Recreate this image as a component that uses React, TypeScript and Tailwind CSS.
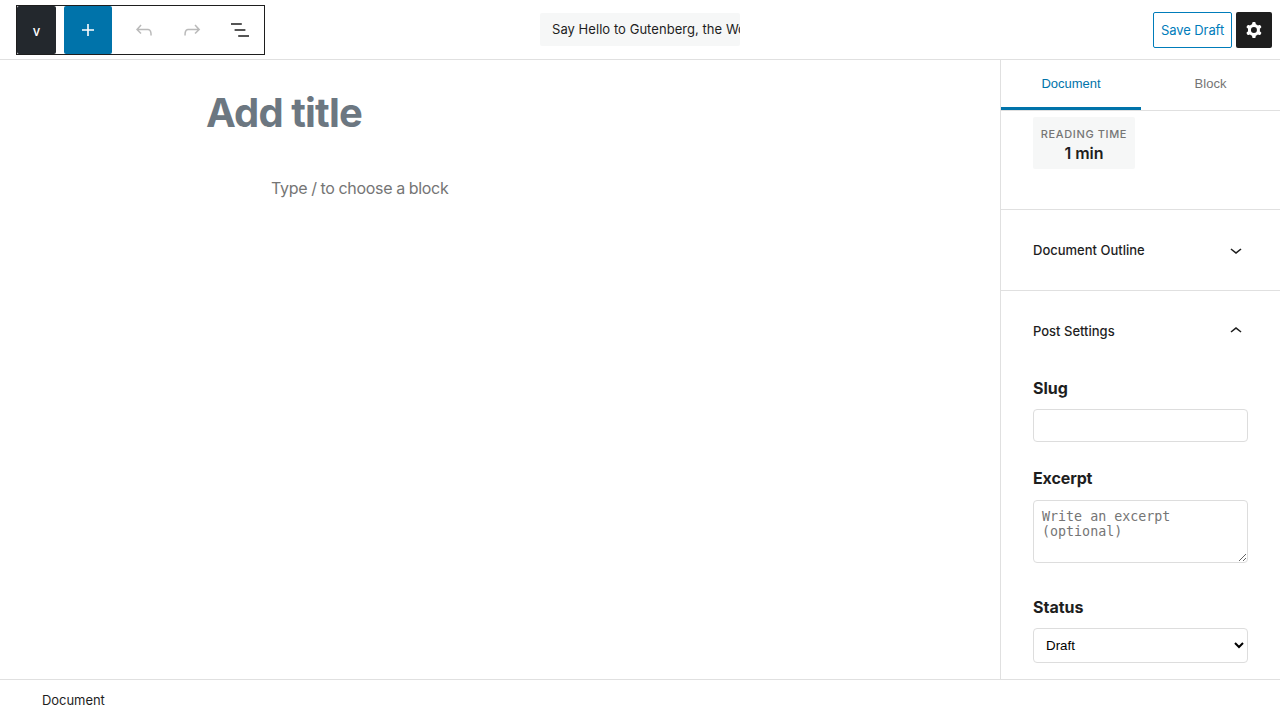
import type { ReactNode } from "react";

const UNDO =
  "M18.3 11.7c-.6-.6-1.4-.9-2.3-.9H6.7l2.9-3.3-1.1-1-4.5 5L8.5 16l1-1-2.7-2.7H16c.5 0 .9.2 1.3.5 1 1 1 3.4 1 4.5v.3h1.5v-.2c0-1.5 0-4.3-1.5-5.7z";
const REDO =
  "M15.6 6.5l-1.1 1 2.9 3.3H8c-.9 0-1.7.3-2.3.9-1.4 1.5-1.4 4.2-1.4 5.6v.2h1.5v-.3c0-1.1 0-3.5 1-4.5.3-.3.7-.5 1.3-.5h9.2L14.5 15l1.1 1.1 4.6-4.6-4.6-5z";
const PLUS = "M18 11.2h-5.2V6h-1.6v5.2H6v1.6h5.2V18h1.6v-5.2H18z";
const LIST =
  "M13.8 5.2H3v1.5h10.8V5.2zm-3.6 12v1.5H21v-1.5H10.2zm7.2-6H6.6v1.5h10.8v-1.5z";
const DOWN = "M17.5 11.6L12 16l-5.5-4.4.9-1.2L12 14l4.5-3.6 1 1.2z";
const UP = "M6.5 12.4L12 8l5.5 4.4-.9 1.2L12 10l-4.5 3.6-1-1.2z";
const COG =
  "M10.289 4.836A1 1 0 0111.275 4h1.306a1 1 0 01.987.836l.244 1.466c.787.26 1.503.679 2.108 1.218l1.393-.522a1 1 0 011.216.437l.653 1.13a1 1 0 01-.23 1.273l-1.148.944a6.025 6.025 0 010 2.435l1.149.946a1 1 0 01.23 1.272l-.653 1.13a1 1 0 01-1.216.437l-1.394-.522c-.605.54-1.32.958-2.108 1.218l-.244 1.466a1 1 0 01-.987.836h-1.306a1 1 0 01-.986-.836l-.244-1.466a5.995 5.995 0 01-2.108-1.218l-1.394.522a1 1 0 01-1.217-.436l-.653-1.131a1 1 0 01.23-1.272l1.149-.946a6.026 6.026 0 010-2.435l-1.148-.944a1 1 0 01-.23-1.272l.653-1.131a1 1 0 011.217-.437l1.393.522a5.994 5.994 0 012.108-1.218l.244-1.466zM14.929 12a3 3 0 11-6 0 3 3 0 016 0z";

function Icon({ d }: { d: string }) {
  return (
    <svg viewBox="0 0 24 24" className="size-6 shrink-0 fill-current">
      <path fillRule="evenodd" clipRule="evenodd" d={d} />
    </svg>
  );
}

function ToolButton({ d, label, disabled }: { d: string; label: string; disabled?: boolean }) {
  return (
    <button
      aria-label={label}
      disabled={disabled}
      className="flex size-12 items-center justify-center disabled:opacity-30"
    >
      <Icon d={d} />
    </button>
  );
}

function Panel({ title, open, children }: { title: string; open?: boolean; children?: ReactNode }) {
  return (
    <section className="border-b border-[#e0e0e0] last:border-b-0">
      <button className="flex h-20 w-full items-center justify-between px-8 text-[13px] font-medium">
        <span className="pt-0.5">{title}</span>
        <Icon d={open ? UP : DOWN} />
      </button>
      {children}
    </section>
  );
}

export default function App() {
  return (
    <div className="flex h-[720px] w-[1280px] flex-col overflow-hidden bg-white font-['Inter',sans-serif] text-[#1e1e1e]">
      <header className="grid h-15 shrink-0 grid-cols-[1fr_200px_1fr] items-center border-b border-[#e0e0e0] pr-2 pl-4">
        <div className="flex w-[249px] border border-[#1e1e1e]">
          <button className="mr-2 h-12 w-[39px] rounded-xs bg-[#23282d] pt-1 text-[13px] font-medium text-white">
            v
          </button>
          <button
            aria-label="Add block"
            className="flex size-12 items-center justify-center rounded-xs bg-[#0073aa] text-white"
          >
            <Icon d={PLUS} />
          </button>
          <div className="ml-2 flex">
            <ToolButton d={UNDO} label="Undo" disabled />
            <ToolButton d={REDO} label="Redo" disabled />
            <ToolButton d={LIST} label="Outline" />
          </div>
        </div>
        <div className="ml-[-4px] h-[33px] w-[200px] overflow-hidden rounded-xs bg-[#f6f7f7] pl-3 text-[13px] leading-[33px] tracking-[0.05px] whitespace-nowrap">
          Say Hello to Gutenberg, the WordPress editor
        </div>
        <div className="flex justify-end gap-1">
          <button className="h-9 w-[79px] rounded-xs border border-[#007cba] pt-0.5 text-[13px] tracking-[-0.08px] whitespace-nowrap text-[#007cba]">
            Save Draft
          </button>
          <button
            aria-label="Settings"
            className="flex size-9 items-center justify-center rounded-xs bg-[#1e1e1e] text-white"
          >
            <Icon d={COG} />
          </button>
        </div>
      </header>

      <div className="flex min-h-0 flex-1">
        <main className="flex-1 pt-[29px] pl-[206px]">
          <h1 className="text-[40px] leading-12 font-bold tracking-[-0.88px] text-[#6c7781]">Add title</h1>
          <p className="mt-[39px] ml-[65px] text-base tracking-[-0.3px] [word-spacing:-0.3px] text-[#757575]">
            Type / to choose a block
          </p>
        </main>

        <aside className="flex w-[280px] shrink-0 flex-col overflow-hidden border-l border-[#e0e0e0]">
          <div className="flex h-[51px] shrink-0 border-b border-[#e0e0e0] font-['Liberation_Sans',sans-serif] text-[13px]">
            <button className="w-[140px] border-b-3 border-[#0073aa] text-[#0073aa]">Document</button>
            <button className="flex-1 border-b-3 border-transparent text-[#757575]">Block</button>
          </div>
          <div className="h-[99px] shrink-0 border-b border-[#e0e0e0] px-8 pt-1.5">
            <div className="h-[52px] w-[102px] rounded-xs bg-[#f6f7f7] pt-2 text-center">
              <div className="text-[11px] leading-[18px] font-medium tracking-[0.62px] whitespace-nowrap text-[#757575]">
                READING TIME
              </div>
              <div className="text-base leading-5 font-semibold">1 min</div>
            </div>
          </div>
          <Panel title="Document Outline" />
          <Panel title="Post Settings" open>
            <div className="flex flex-col px-8 pt-[5px]">
              <label className="text-base font-bold tracking-[-0.02px]">Slug</label>
              <input className="mt-[9px] h-[33px] rounded-[4px] border border-[#ddd]" />
              <label className="mt-[24px] text-base font-bold tracking-[-0.12px]">Excerpt</label>
              <textarea
                placeholder="Write an excerpt (optional)"
                className="mt-[10px] h-[63px] resize-y rounded-[4px] border border-[#ddd] p-2 font-['DejaVu_Sans_Mono',monospace] text-[13.33px] leading-[15px] placeholder:text-[#757575]"
              />
              <label className="mt-[32px] text-base font-bold">Status</label>
              <select className="mt-[9px] h-[35px] rounded-[4px] border border-[#ddd] bg-white px-2 font-['Liberation_Sans',sans-serif] text-[13.33px] text-black">
                <option>Draft</option>
              </select>
            </div>
          </Panel>
        </aside>
      </div>

      <footer className="flex h-[41px] shrink-0 items-center border-t border-[#e0e0e0] pt-0.5 pl-[42px] text-[13px] tracking-[-0.06px]">
        Document
      </footer>
    </div>
  );
}
